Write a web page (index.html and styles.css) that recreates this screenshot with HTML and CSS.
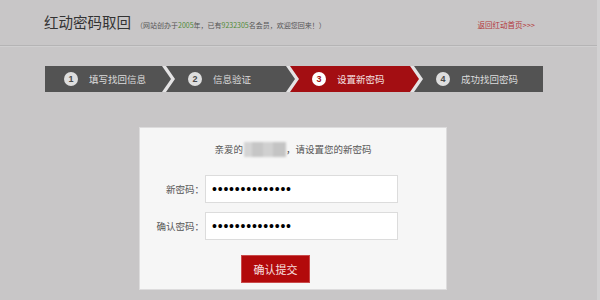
FILE: index.html
```html
<!DOCTYPE html>
<html lang="zh-CN">
<head>
<meta charset="utf-8">
<title>红动密码取回</title>
<link rel="stylesheet" href="styles.css">
</head>
<body>
<div class="page">
  <header class="header">
    <h1 class="title">红动密码取回</h1>
    <span class="sub">（网站创办于<em>2005</em>年，已有<em>9232305</em>名会员，欢迎您回来！）</span>
    <a class="home" href="#">返回红动首页&gt;&gt;&gt;</a>
  </header>

  <ol class="steps">
    <li class="step first"><span class="num">1</span><span class="label">填写找回信息</span></li>
    <li class="step"><span class="num">2</span><span class="label">信息验证</span></li>
    <li class="step active"><span class="num">3</span><span class="label">设置新密码</span></li>
    <li class="step last"><span class="num">4</span><span class="label">成功找回密码</span></li>
  </ol>

  <form class="card">
    <p class="greet">亲爱的<span class="masked"></span>，请设置您的新密码</p>
    <div class="row">
      <label class="lbl" for="p1">新密码：</label>
      <input class="pwd" id="p1" type="password" value="abcdefghijklmn">
    </div>
    <div class="row row2">
      <label class="lbl" for="p2">确认密码：</label>
      <input class="pwd" id="p2" type="password" value="abcdefghijklmn">
    </div>
    <button class="submit" type="button">确认提交</button>
  </form>
</div>
</body>
</html>
```
FILE: styles.css
```css
* { box-sizing: border-box; }
html, body {
  margin: 0;
  padding: 0;
  background: #d2d1d2;
  font-family: "Noto Sans CJK SC", "Liberation Sans", sans-serif;
}
.page {
  width: 597px;
  height: 300px;
  background: #c8c6c7;
  overflow: hidden;
}
.header {
  display: flex;
  align-items: baseline;
  height: 46px;
  padding: 12px 62px 0 44px;
  border-bottom: 1px solid #b5b4b5;
  box-shadow: 0 1px 0 #d0cfd0;
}
.title {
  margin: 0;
  font-size: 14.5px;
  line-height: 20px;
  font-weight: normal;
  color: #333;
}
.sub {
  margin-left: 5px;
  font-size: 7px;
  line-height: 10px;
  color: #555;
}
.sub em {
  font-style: normal;
  color: #4f8a35;
}
.home {
  margin-left: auto;
  font-size: 7.5px;
  line-height: 10px;
  color: #b3363a;
  text-decoration: none;
}

.steps {
  display: flex;
  list-style: none;
  margin: 20px 0 0 45px;
  padding: 0;
  width: 498px;
  height: 26px;
  background: #e4e3e4;
}
.step {
  flex: 1 1 0;
  display: flex;
  align-items: center;
  height: 26px;
  margin-left: -5px;
  padding-left: 22px;
  background: #535353;
  color: #dcdcdc;
  clip-path: polygon(0 0, calc(100% - 9px) 0, 100% 50%, calc(100% - 9px) 100%, 0 100%, 9px 50%);
}
.step.first {
  margin-left: 0;
  padding-left: 19px;
  clip-path: polygon(0 0, calc(100% - 9px) 0, 100% 50%, calc(100% - 9px) 100%, 0 100%);
}
.step.last {
  clip-path: polygon(0 0, 100% 0, 100% 100%, 0 100%, 9px 50%);
}
.step.active {
  background: #a30e12;
  color: #f5e4e4;
}
.num {
  width: 14px;
  height: 14px;
  border-radius: 50%;
  background: #dedede;
  color: #4a4a4a;
  font-family: "Liberation Sans", sans-serif;
  font-weight: bold;
  font-size: 9px;
  line-height: 14px;
  text-align: center;
}
.active .num {
  background: #fff;
  color: #a30e12;
}
.label {
  margin-left: 11px;
  font-size: 9.5px;
  line-height: 14px;
}

.card {
  display: flex;
  flex-direction: column;
  width: 308px;
  height: 163px;
  margin: 35px 0 0 139px;
  padding: 14px 0 6px;
  background: #f6f6f6;
  border: 1px solid #dddcdd;
}
.greet {
  margin: 0;
  height: 15px;
  font-size: 9.5px;
  line-height: 15px;
  text-align: center;
  color: #555;
}
.masked {
  display: inline-block;
  vertical-align: top;
  width: 42px;
  height: 15px;
  margin: 0 0 0 1px;
  background:
    linear-gradient(90deg, #d4d4d4 0 20%, #c6c6c6 20% 45%, #d0d0d0 45% 70%, #c4c4c4 70% 100%);
  filter: blur(1.2px);
}
.row {
  display: flex;
  align-items: center;
  margin-top: 18px;
}
.row2 { margin-top: 9px; }
.lbl {
  width: 64px;
  font-size: 9.5px;
  text-align: right;
  color: #555;
}
.pwd {
  width: 193px;
  height: 28px;
  margin: 0 0 0 1px;
  padding: 0 0 0 6px;
  border: 1px solid #dcdcdc;
  background: #fff;
  color: #000;
  font-family: "Liberation Sans", sans-serif;
  font-size: 14px;
  letter-spacing: 0.8px;
  outline: none;
}
.submit {
  width: 69px;
  height: 28px;
  margin: 15px 0 0 101px;
  padding: 0;
  border: 1px solid #c94a4a;
  background: #b20a0b;
  color: #f8e0e0;
  font-family: "Noto Sans CJK SC", sans-serif;
  font-size: 11px;
  line-height: 26px;
}
```
